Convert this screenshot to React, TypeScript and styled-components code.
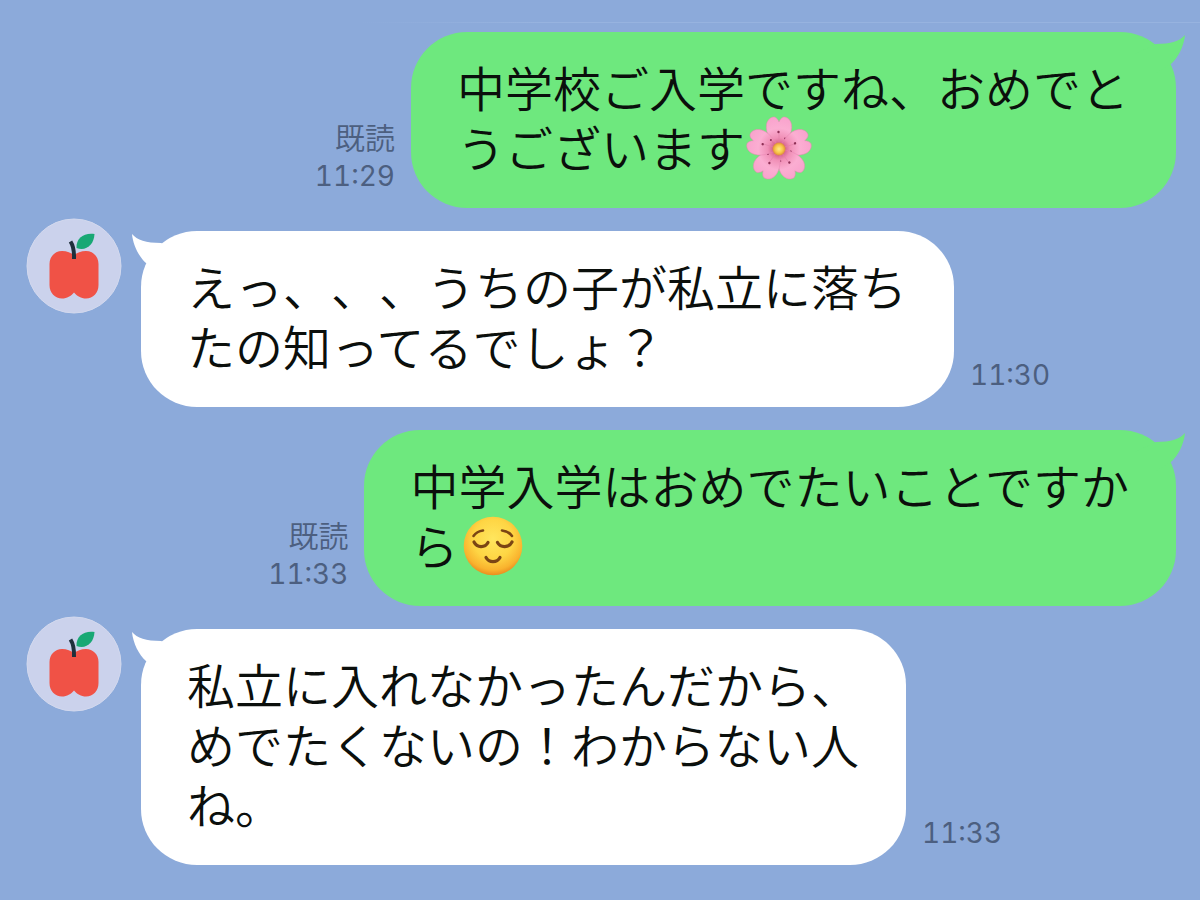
import React from "react";
import styled, { createGlobalStyle, css } from "styled-components";

const GlobalStyle = createGlobalStyle`
  * { box-sizing: border-box; }
  body {
    margin: 0;
    background: #8caada;
    font-family: Inter, "Noto Sans CJK JP", sans-serif;
  }
`;

type Side = "mine" | "theirs";

const Chat = styled.main`
  display: flex;
  flex-direction: column;
  gap: 23px;
  min-height: 100vh;
  padding: 32px 24px 32px 26px;
  background: linear-gradient(to right, transparent 30%, #97b3df 45%) 0 22px / 100% 1px no-repeat #8caada;
`;

const Row = styled.article<{ $side: Side }>`
  display: flex;
  flex-direction: ${(p) => (p.$side === "mine" ? "row-reverse" : "row")};
  align-items: flex-end;
  gap: 16px;
`;

const Avatar = styled.div`
  align-self: flex-start;
  flex: none;
  width: 96px;
  height: 96px;
  margin: -13px 3px 0 0;

  svg { display: block; }
`;

const Bubble = styled.div<{ $side: Side }>`
  position: relative;
  flex: none;
  padding: 24px 47px 32px 46px;
  border-radius: 56px;
  background: ${(p) => (p.$side === "mine" ? "#6ee87e" : "#ffffff")};
`;

const Tail = styled.svg<{ $side: Side }>`
  position: absolute;
  top: 2px;
  width: 52px;
  height: 48px;
  ${(p) =>
    p.$side === "mine"
      ? css`right: -9px; fill: #6ee87e; transform: scaleX(-1);`
      : css`left: -9px; fill: #ffffff;`}
`;

const Message = styled.p`
  position: relative;
  margin: 0;
  color: #0b0f0c;
  font-family: "Noto Sans CJK JP", sans-serif;
  font-size: 48px;
  font-weight: 350;
  line-height: 60px;
  white-space: pre;
  text-spacing-trim: space-all;
`;

const Emoji = styled.svg`
  width: 66px;
  height: 66px;
  margin: -1px 0 -5px 1px;
  vertical-align: top;
`;

const Meta = styled.div<{ $side: Side }>`
  display: flex;
  flex-direction: column;
  padding-bottom: 12px;
  color: #4c5f80;
  font-size: 28px;
  line-height: 40px;
  font-variant-numeric: tabular-nums;
  text-align: ${(p) => (p.$side === "mine" ? "right" : "left")};
`;

const Read = styled.span`
  font-family: "Noto Sans CJK JP", sans-serif;
  font-size: 30px;
  font-weight: 350;
`;

function Apple() {
  return (
    <svg width="96" height="96" viewBox="0 0 96 96" role="img" aria-label="りんご">
      <circle cx="48" cy="48" r="47" fill="#cbd2ec" stroke="#d3d9ee" strokeWidth="1" />
      <path
        d="M23.500 46C23.500 38.500 29 33 36 33C41 33 45 35 48 37C51 35 55 33 60 33C67 33 72.500 38.500 72.500 46V67C72.500 75 67 80.500 60 80.500C55 80.500 51 78 48 74.500C45 78 41 80.500 36 80.500C29 80.500 23.500 75 23.500 67Z"
        fill="#f05246"
      />
      <path d="M44.500 23.500C47.500 28 48.300 33 48 41" fill="none" stroke="#1f2f3c" strokeWidth="4" />
      <path d="M50.500 30C50 20 58 14.500 68.500 16C68 27 60 33.500 50.500 30Z" fill="#18a874" />
    </svg>
  );
}

function Blossom() {
  const petals = [0, 72, 144, 216, 288];
  return (
    <Emoji viewBox="0 0 66 66" role="img" aria-label="桜">
      <defs>
        <radialGradient id="petal" gradientUnits="userSpaceOnUse" cx="33" cy="34" r="32">
          <stop offset="0.150" stopColor="#cf5a86" />
          <stop offset="0.350" stopColor="#f08fb6" />
          <stop offset="0.650" stopColor="#fbaed2" />
          <stop offset="1" stopColor="#f9a3cd" />
        </radialGradient>
        <radialGradient id="heart">
          <stop offset="0" stopColor="#ffe98a" />
          <stop offset="0.600" stopColor="#f8c548" />
          <stop offset="1" stopColor="#dd8a3c" />
        </radialGradient>
      </defs>
      {petals.map((a) => (
        <g key={a} transform={`rotate(${a} 33 34)`}>
          <path
            d="M33 34C26 28 19 18 20.500 9.500C21.500 4.500 25 1.800 28.500 2C30.500 2.500 32 4.500 33 7C34 4.500 35.500 2.500 37.500 2C41 1.800 44.500 4.500 45.500 9.500C47 18 40 28 33 34Z"
            fill="url(#petal)"
            stroke="#ea86b4"
            strokeWidth="0.500"
          />
          <path d="M33 30V18" stroke="#e07fa8" strokeWidth="0.600" />
          <circle cx="32.500" cy="17" r="1.200" fill="#8e2f55" />
          <path d="M36 28L39 24" stroke="#d76898" strokeWidth="0.600" />
          <circle cx="39" cy="23.500" r="1" fill="#8e2f55" />
        </g>
      ))}
      <circle cx="33" cy="34" r="6.500" fill="url(#heart)" />
    </Emoji>
  );
}

function Relieved() {
  return (
    <Emoji viewBox="0 0 66 66" role="img" aria-label="ほっとした顔">
      <defs>
        <radialGradient id="face" cx="0.500" cy="0.380" r="0.620">
          <stop offset="0" stopColor="#ffe65e" />
          <stop offset="0.550" stopColor="#fed544" />
          <stop offset="0.850" stopColor="#f9b32e" />
          <stop offset="1" stopColor="#ea8c1e" />
        </radialGradient>
      </defs>
      <circle cx="34" cy="33" r="29.300" fill="url(#face)" />
      <g fill="none" stroke="#7b4514" strokeLinecap="round">
        <path d="M14.500 23C17 19.500 20 18 24 17.500" strokeWidth="2.600" />
        <path d="M43 17.500C47.500 18 50.500 19.500 53 23" strokeWidth="2.600" />
        <path d="M15 29C18 35 26 35 29 29.500" strokeWidth="3.200" />
        <path d="M38.500 29.500C41.500 35 50 35 53 29" strokeWidth="3.200" />
        <path d="M27 44.500C30 50 38 50 41 44.500" strokeWidth="3.200" />
      </g>
    </Emoji>
  );
}

interface Entry {
  side: Side;
  time: string;
  text: string;
  emoji?: React.ReactNode;
}

const entries: Entry[] = [
  {
    side: "mine",
    time: "11:29",
    text: "中学校ご入学ですね、おめでと\nうございます",
    emoji: <Blossom />,
  },
  {
    side: "theirs",
    time: "11:30",
    text: "えっ、、、うちの子が私立に落ち\nたの知ってるでしょ？",
  },
  {
    side: "mine",
    time: "11:33",
    text: "中学入学はおめでたいことですか\nら",
    emoji: <Relieved />,
  },
  {
    side: "theirs",
    time: "11:33",
    text: "私立に入れなかったんだから、\nめでたくないの！わからない人\nね。",
  },
];

export default function App() {
  return (
    <>
      <GlobalStyle />
      <Chat>
        {entries.map(({ side, time, text, emoji }, i) => (
          <Row key={i} $side={side}>
            {side === "theirs" && (
              <Avatar>
                <Apple />
              </Avatar>
            )}
            <Bubble $side={side}>
              <Tail $side={side} viewBox="0 0 52 48" aria-hidden="true">
                <path d="M0 1C5 7 14 10 29 10L50 20L30 40L14 30C7 24 1 12 0 1Z" />
              </Tail>
              <Message>
                {text}
                {emoji}
              </Message>
            </Bubble>
            <Meta $side={side}>
              {side === "mine" && <Read>既読</Read>}
              <time>{time}</time>
            </Meta>
          </Row>
        ))}
      </Chat>
    </>
  );
}
